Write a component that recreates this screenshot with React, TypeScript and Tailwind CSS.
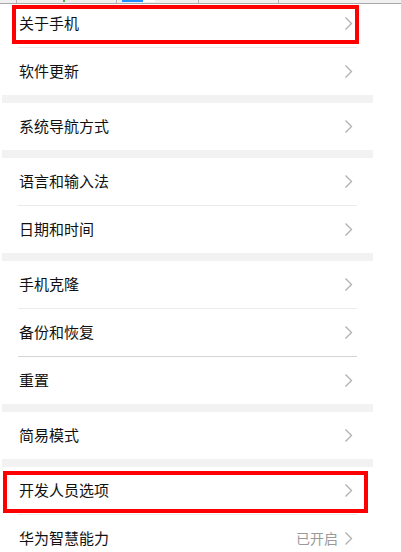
import React from "react"

type Row = { label: string; value?: string }

const sections: Row[][] = [
  [{ label: "关于手机" }, { label: "软件更新" }],
  [{ label: "系统导航方式" }],
  [{ label: "语言和输入法" }, { label: "日期和时间" }],
  [{ label: "手机克隆" }, { label: "备份和恢复" }, { label: "重置" }],
  [{ label: "简易模式" }],
  [{ label: "开发人员选项" }, { label: "华为智慧能力", value: "已开启" }],
]

function Chevron() {
  return (
    <svg width="9" height="15" viewBox="0 0 9 15" fill="none">
      <path d="M1.5 1.5 L7.5 7.5 L1.5 13.5" stroke="#b0b0b0" strokeWidth="1.3" />
    </svg>
  )
}

function SettingRow({ row, first }: { row: Row; first?: boolean }) {
  return (
    <div className={`flex items-center justify-between pl-[19px] pr-[20px] ${first ? "h-[43px] pb-[4px]" : "h-[47px]"}`}>
      <span className="text-[15px] text-[#111111]">{row.label}</span>
      <div className="flex items-center gap-[6px]">
        {row.value && <span className="text-[14px] text-[#9a9a9a]">{row.value}</span>}
        <Chevron />
      </div>
    </div>
  )
}

export default function App() {
  return (
    <div
      className="relative w-[401px] h-[552px] overflow-hidden bg-white"
      style={{ fontFamily: '"Noto Sans CJK SC", "Noto Sans", sans-serif' }}
    >
      {/* toolbar remnant at top */}
      <div className="flex h-[4px] items-start bg-[#f0f0f0] border-b border-[#a8a8a8]">
        <div className="w-[17px] h-[3px] border-r border-[#b8b8b8]" />
        <div className="w-[46px]" />
        <div className="w-[2px] h-[2px] bg-[#4caf50]" />
        <div className="w-[52px] h-[3px] border-r border-[#b8b8b8]" />
        <div className="w-[5px]" />
        <div className="w-[21px] h-[2px] bg-[#1e90ff]" />
        <div className="w-[12px] h-[2px] bg-white" />
        <div className="w-[44px] h-[3px] border-r border-[#b8b8b8]" />
        <div className="w-[80px] h-[3px] border-r border-[#b8b8b8]" />
      </div>

      <div className="w-[373px]">
        {sections.map((section, si) => (
          <div key={si}>
            {si > 0 && <div className="h-[8px] bg-[#f2f2f2] ml-[2px]" />}
            {section.map((row, ri) => (
              <div key={row.label}>
                {ri > 0 && (
                  <div className={`h-px ml-[18px] mr-[16px] ${row.label === "重置" ? "bg-[#d4d4d4]" : "bg-[#ebebeb]"}`} />
                )}
                <SettingRow row={row} first={si === 0 && ri === 0} />
              </div>
            ))}
          </div>
        ))}
      </div>

      {/* red highlight boxes drawn over the screenshot */}
      <div className="absolute left-[12px] top-[5px] w-[347px] h-[39px] border-4 border-[#ff0000]" />
      <div className="absolute left-[3px] top-[471px] w-[365px] h-[42px] border-4 border-[#ff0000]" />
    </div>
  )
}
